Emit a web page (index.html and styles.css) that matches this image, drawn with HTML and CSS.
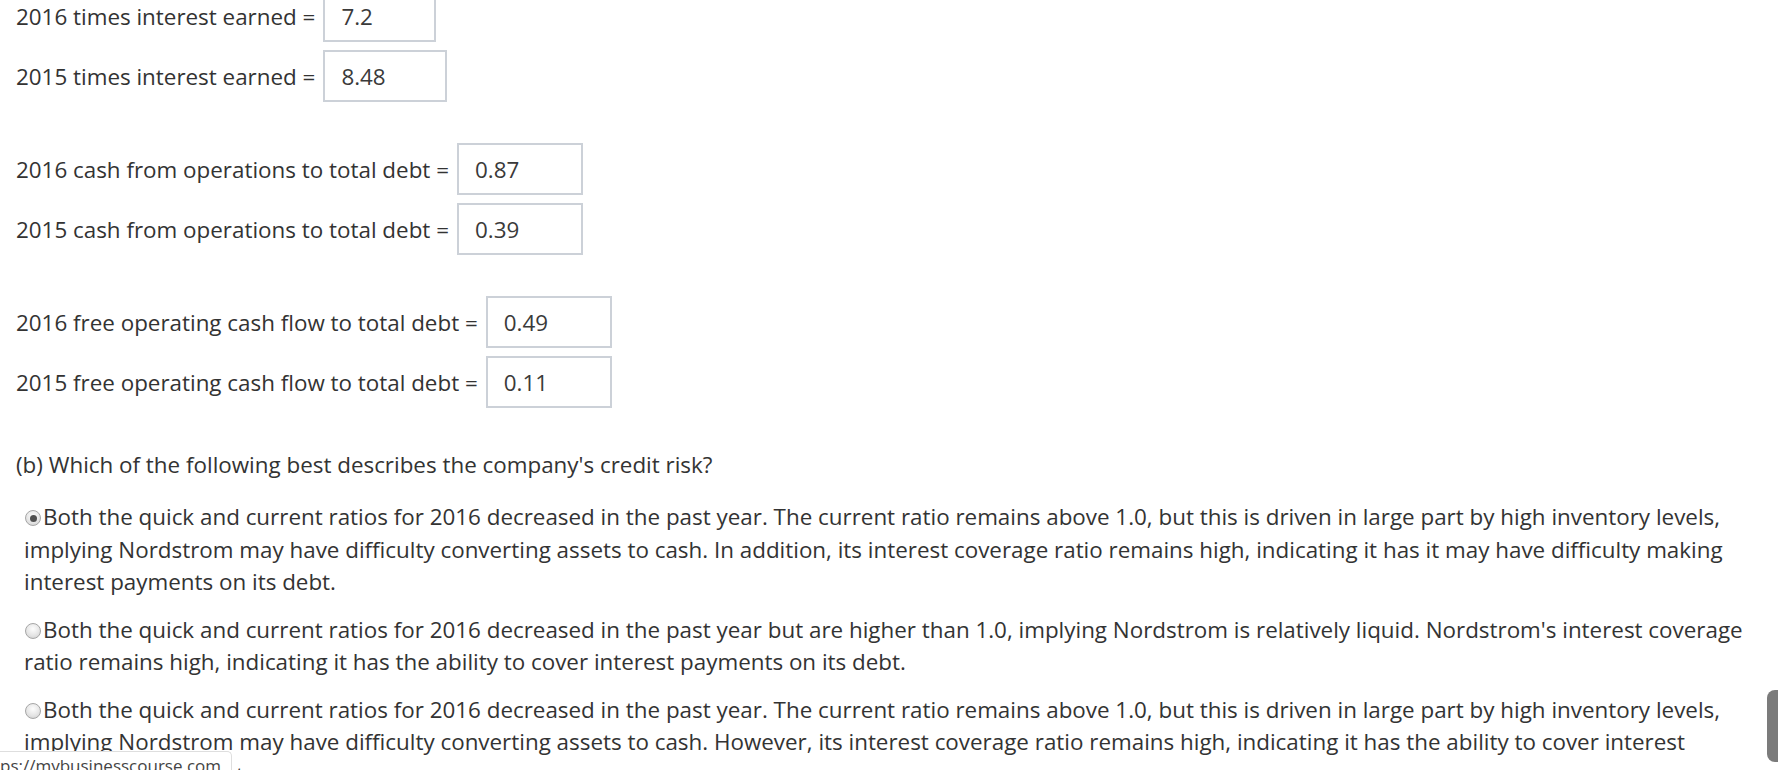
FILE: index.html
```html
<!DOCTYPE html>
<html lang="en">
<head>
<meta charset="utf-8">
<title>Credit risk ratios</title>
<link rel="stylesheet" href="styles.css">
</head>
<body>
<main class="page">
  <section class="group">
    <div class="field-row">
      <span class="label">2016 times interest earned =</span>
      <span class="answer w-sm">7.2</span>
    </div>
    <div class="field-row">
      <span class="label">2015 times interest earned =</span>
      <span class="answer w-md">8.48</span>
    </div>
  </section>
  <section class="group">
    <div class="field-row">
      <span class="label">2016 cash from operations to total debt =</span>
      <span class="answer">0.87</span>
    </div>
    <div class="field-row">
      <span class="label">2015 cash from operations to total debt =</span>
      <span class="answer">0.39</span>
    </div>
  </section>
  <section class="group">
    <div class="field-row">
      <span class="label">2016 free operating cash flow to total debt =</span>
      <span class="answer">0.49</span>
    </div>
    <div class="field-row">
      <span class="label">2015 free operating cash flow to total debt =</span>
      <span class="answer">0.11</span>
    </div>
  </section>

  <p class="question">(b) Which of the following best describes the company's credit risk?</p>

  <div class="options">
    <p class="option"><span class="radio checked"></span>Both the quick and current ratios for 2016 decreased in the past year. The current ratio remains above 1.0, but this is driven in large part by high inventory levels, implying Nordstrom may have difficulty converting assets to cash. In addition, its interest coverage ratio remains high, indicating it has it may have difficulty making interest payments on its debt.</p>
    <p class="option"><span class="radio"></span>Both the quick and current ratios for 2016 decreased in the past year but are higher than 1.0, implying Nordstrom is relatively liquid. Nordstrom's interest coverage ratio remains high, indicating it has the ability to cover interest payments on its debt.</p>
    <p class="option"><span class="radio"></span>Both the quick and current ratios for 2016 decreased in the past year. The current ratio remains above 1.0, but this is driven in large part by high inventory levels, implying Nordstrom may have difficulty converting assets to cash. However, its interest coverage ratio remains high, indicating it has the ability to cover interest payments on its debt.</p>
  </div>
</main>
<div class="status-bar">ps://mybusinesscourse.com</div>
<div class="scroll-thumb"></div>
</body>
</html>
```
FILE: styles.css
```css
html, body {
  margin: 0;
  padding: 0;
  background: #ffffff;
  overflow: hidden;
}
body {
  font-family: "Open Sans", "Noto Sans", sans-serif;
  font-size: 22.4px;
  color: #333333;
}
.page {
  margin-top: -10px;
  padding-left: 16px;
  padding-right: 20px;
}
.group {
  display: flex;
  flex-direction: column;
  gap: 8px;
  margin-bottom: 41px;
}
.group:last-of-type {
  margin-bottom: 0;
}
.field-row {
  display: flex;
  align-items: center;
  gap: 8px;
}
.label {
  white-space: nowrap;
}
.answer {
  box-sizing: border-box;
  width: 126px;
  height: 52px;
  border: 2px solid #ccd1d8;
  padding-left: 16px;
  display: flex;
  align-items: center;
  color: #3a3a3a;
}
.answer.w-sm { width: 113px; }
.answer.w-md { width: 124px; }
.question {
  margin: 41px 0 20px;
  line-height: 32px;
}
.options {
  padding-left: 8px;
}
.option {
  margin: 0 0 15px;
  line-height: 32.5px;
}
.radio {
  display: inline-block;
  box-sizing: border-box;
  width: 16px;
  height: 16px;
  margin: 0 2px 0 1px;
  border-radius: 50%;
  border: 1px solid #a6a6a6;
  background: radial-gradient(circle at 50% 35%, #fdfdfd 0%, #e6e6e6 55%, #cccccc 100%);
  vertical-align: -1px;
  position: relative;
}
.radio.checked::after {
  content: "";
  position: absolute;
  left: 3.5px;
  top: 3.5px;
  width: 7px;
  height: 7px;
  border-radius: 50%;
  background: #505050;
}
.status-bar {
  position: fixed;
  left: 0;
  bottom: 0;
  width: 232px;
  height: 19px;
  box-sizing: border-box;
  background: #ffffff;
  border-top: 1px solid #dedede;
  border-right: 1px solid #dedede;
  border-top-right-radius: 5px;
  font-family: "Open Sans", sans-serif;
  font-size: 17px;
  line-height: 28px;
  color: #444444;
  white-space: nowrap;
  overflow: hidden;
}
.scroll-thumb {
  position: fixed;
  right: 0;
  top: 690px;
  width: 11px;
  height: 72px;
  background: #7b7b7b;
  border-radius: 8px 0 0 8px;
}
```
